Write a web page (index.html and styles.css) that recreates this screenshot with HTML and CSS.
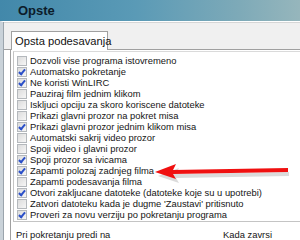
FILE: index.html
```html
<!DOCTYPE html>
<html lang="sr">
<head>
  <meta charset="UTF-8" />
  <title>Opste</title>
  <link rel="stylesheet" href="styles.css">
</head>
<body>

  <div class="window">
    <div class="titlebar">Opste</div>

    <div class="frame">
      <div class="tabstrip">
        <div class="tab">Opsta podesavanja</div>
      </div>

      <div class="panel">
        <ul class="options">
          <li><span class="box"></span>Dozvoli vise programa istovremeno</li>
          <li><span class="box checked"></span>Automatsko pokretanje</li>
          <li><span class="box checked"></span>Ne koristi WinLIRC</li>
          <li><span class="box"></span>Pauziraj film jednim klikom</li>
          <li><span class="box"></span>Iskljuci opciju za skoro koriscene datoteke</li>
          <li><span class="box"></span>Prikazi glavni prozor na pokret misa</li>
          <li><span class="box checked"></span>Prikazi glavni prozor jednim klikom misa</li>
          <li><span class="box"></span>Automatski sakrij video prozor</li>
          <li><span class="box"></span>Spoji video i glavni prozor</li>
          <li><span class="box checked"></span>Spoji prozor sa ivicama</li>
          <li><span class="box checked"></span>Zapamti polozaj zadnjeg filma</li>
          <li><span class="box"></span>Zapamti podesavanja filma</li>
          <li><span class="box checked"></span>Otvori zakljucane datoteke (datoteke koje su u upotrebi)</li>
          <li><span class="box"></span>Zatvori datoteku kada je dugme 'Zaustavi' pritisnuto</li>
          <li><span class="box checked"></span>Proveri za novu verziju po pokretanju programa</li>
        </ul>

        <div class="footer">
          <span>Pri pokretanju predi na</span>
          <span class="right">Kada zavrsi</span>
        </div>
      </div>
    </div>

    <!-- crvena strelica preko liste -->
    <svg class="arrow" width="150" height="30" viewBox="0 0 150 30">
      <path d="M7 15 L28 7 L25 13 L138 11 L138 15 L25 17 L28 22 Z" fill="#999" opacity="0.35" transform="translate(1,2)"/>
      <path d="M5 13 L26 5 L23 11 L138 9 L138 13 L23 15 L26 20 Z" fill="#f01010"/>
    </svg>
  </div>

</body>
</html>
```

FILE: styles.css
```css
body {
  margin: 0;
  padding: 0;
  font-family: 'Liberation Sans', Arial, sans-serif;
  background: #fff;
  color: #111;
}

.window {
  position: relative;
  width: 300px;
  height: 240px;
  overflow: hidden;
  display: flex;
  flex-direction: column;
}

.titlebar {
  height: 21px;
  flex: none;
  padding-left: 18px;
  line-height: 22px;
  font-size: 13px;
  font-weight: bold;
  color: #0c1c2a;
  background: linear-gradient(to right, #4288aa 0%, #5a9ab6 45%, #7eaab8 80%, #96b6bc 100%);
}

.frame {
  flex: 1;
  display: flex;
  flex-direction: column;
  border-left: 3px solid #c9d2d9;
  box-shadow: inset 1px 0 0 #9aa4ac;
  border-top: 1px solid #fff;
}

.tabstrip {
  height: 26px;
  flex: none;
  background: #f0f0f0;
  border-top: 1px solid #d6d6d6;
  border-bottom: 1px solid #a0a0a0;
  display: flex;
  align-items: flex-end;
  padding-left: 7px;
  margin-left: 1px;
}

.tab {
  width: 92px;
  height: 18px;
  margin-bottom: -1px;
  padding-left: 3px;
  background: #fff;
  border: 1px solid #a0a0a0;
  border-bottom: none;
  font-size: 11.2px;
  line-height: 18px;
  white-space: nowrap;
  color: #111;
}

.panel {
  flex: 1;
  margin-left: 7px;
  border-left: 1px solid #a0a0a0;
  background: #fff;
  padding: 1px 0 0 2px;
}

.options {
  list-style: none;
  margin: 0;
  padding: 3px 0 1px 3px;
  border: 1px solid #c4c4c4;
  border-right: none;
  border-top-color: #dadada;
}

.options li {
  display: flex;
  align-items: center;
  height: 11px;
  font-size: 9.4px;
  white-space: nowrap;
  color: #151515;
}

.box {
  position: relative;
  width: 8px;
  height: 8px;
  flex: none;
  margin-right: 3px;
  border: 1px solid #b4b8bc;
  background: linear-gradient(135deg, #dcdcdc, #f6f6f6);
}

.box.checked::after {
  content: "";
  position: absolute;
  left: 2px;
  top: 0;
  width: 2px;
  height: 5px;
  border: solid #2a4fc8;
  border-width: 0 2px 2px 0;
  transform: rotate(40deg);
}

.footer {
  display: flex;
  padding: 7px 0 0 3px;
  font-size: 9.4px;
  color: #151515;
}

.footer .right {
  margin-left: auto;
  margin-right: 28px;
}

.arrow {
  position: absolute;
  left: 150px;
  top: 159px;
}
```
